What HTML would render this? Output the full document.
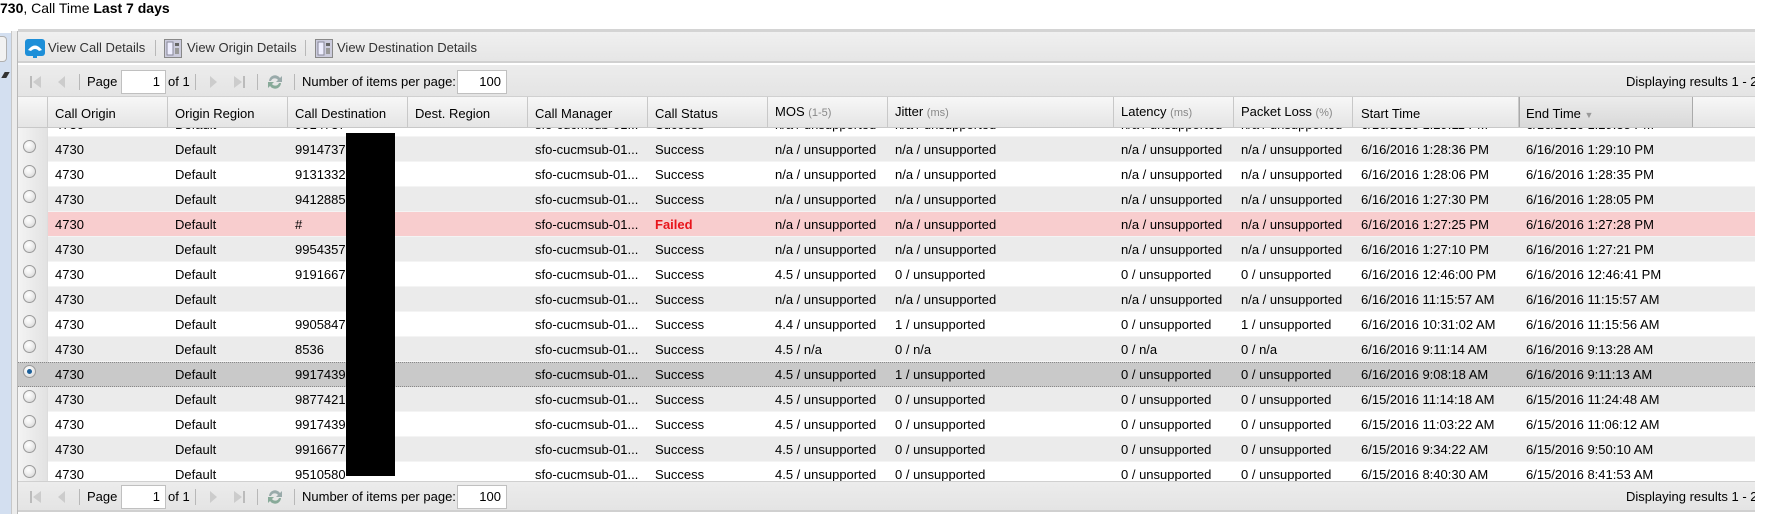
<!DOCTYPE html>
<html><head><meta charset="utf-8"><style>
*{margin:0;padding:0;box-sizing:border-box}
body{width:1774px;height:514px;overflow:hidden;background:#fff;font-family:"Liberation Sans",Arial,sans-serif;font-size:13px;color:#000;position:relative}
.a{position:absolute}
.t{position:absolute;white-space:nowrap}
.row{position:absolute;left:48px;width:1707px;height:25px;border-bottom:1px solid #f4f4f4}
.rad{position:absolute;left:23px;width:13px;height:13px;border-radius:50%;border:1px solid #9a9a9a;background:radial-gradient(circle at 40% 35%,#fff 0,#f0f0f0 40%,#d0d0d0 100%)}
.sep{position:absolute;width:1px;background:#b8b8b8}
.hdr{position:absolute;top:97px;height:31px;border-right:1px solid #c8c8c8;background:linear-gradient(#f7f7f7,#e4e4e4)}
.small{color:#888;font-size:11px}
.inp{position:absolute;background:#fff;border:1px solid #c0c0c0;text-align:right;padding-right:5px;line-height:22px}
</style></head><body>
<div class="t" style="left:0;top:-1px;font-size:14px;line-height:18px"><b>730</b>, Call Time <b>Last 7 days</b></div>
<div class="a" style="left:0;top:33px;width:11px;height:481px;background:#d3dff0"></div>
<div class="a" style="left:0;top:36px;width:7px;height:26px;background:#f2f2f2;border:1px solid #b0b0b0;border-left:none;border-radius:0 4px 4px 0"></div>
<div class="a" style="left:3px;top:72px;width:5px;height:6px;background:#333;transform:skewX(-30deg)"></div>
<div class="a" style="left:11px;top:31px;width:7px;height:483px;background:#ececec;border-left:1px solid #c8c8c8;border-right:1px solid #b8b8b8"></div>
<div class="a" style="left:18px;top:29px;width:1737px;height:3px;background:#d4d4d4"></div>
<div class="a" style="left:18px;top:32px;width:1737px;height:31px;background:linear-gradient(#f0f0f0,#e6e6e6);border-bottom:2px solid #d0d0d0"></div>
<svg class="a" style="left:25px;top:39px" width="20" height="20" viewBox="0 0 20 20"><rect x="0" y="0" width="20" height="17" rx="3" fill="#1e8fd8"/><path d="M3 11 Q10 2 17 11 L14 12 Q10 8 6 12 Z" fill="#fff"/><rect x="8" y="16" width="4" height="3" fill="#1e8fd8"/></svg>
<div class="t" style="left:48px;top:40px;color:#333">View Call Details</div>
<div class="sep" style="left:155px;top:40px;height:16px"></div>
<svg class="a" style="left:164px;top:39px" width="18" height="19" viewBox="0 0 18 19"><rect x="0.5" y="0.5" width="17" height="18" fill="#ccd" stroke="#888"/><rect x="3" y="3" width="6" height="13" fill="#eef" stroke="#889"/><rect x="11" y="4" width="4" height="3" fill="#666"/><rect x="11" y="9" width="4" height="6" fill="#999"/></svg>
<div class="t" style="left:187px;top:40px;color:#333">View Origin Details</div>
<div class="sep" style="left:305px;top:40px;height:16px"></div>
<svg class="a" style="left:315px;top:39px" width="18" height="19" viewBox="0 0 18 19"><rect x="0.5" y="0.5" width="17" height="18" fill="#ccd" stroke="#888"/><rect x="3" y="3" width="6" height="13" fill="#eef" stroke="#889"/><rect x="11" y="4" width="4" height="3" fill="#666"/><rect x="11" y="9" width="4" height="6" fill="#999"/></svg>
<div class="t" style="left:337px;top:40px;color:#333">View Destination Details</div>
<div class="a" style="left:18px;top:65px;width:1737px;height:32px;background:linear-gradient(#ececec,#e4e4e4);border-bottom:1px solid #d0d0d0"></div>
<div id="pg1"></div>
<div class="hdr" style="left:18px;width:30px"></div>
<div class="hdr" style="left:48px;width:120px"></div><div class="t" style="left:55px;top:106px">Call Origin</div>
<div class="hdr" style="left:168px;width:120px"></div><div class="t" style="left:175px;top:106px">Origin Region</div>
<div class="hdr" style="left:288px;width:120px"></div><div class="t" style="left:295px;top:106px">Call Destination</div>
<div class="hdr" style="left:408px;width:120px"></div><div class="t" style="left:415px;top:106px">Dest. Region</div>
<div class="hdr" style="left:528px;width:120px"></div><div class="t" style="left:535px;top:106px">Call Manager</div>
<div class="hdr" style="left:648px;width:120px"></div><div class="t" style="left:655px;top:106px">Call Status</div>
<div class="hdr" style="left:768px;width:120px"></div><div class="t" style="left:775px;top:104px">MOS <span class="small">(1-5)</span></div>
<div class="hdr" style="left:888px;width:226px"></div><div class="t" style="left:895px;top:104px">Jitter <span class="small">(ms)</span></div>
<div class="hdr" style="left:1114px;width:120px"></div><div class="t" style="left:1121px;top:104px">Latency <span class="small">(ms)</span></div>
<div class="hdr" style="left:1234px;width:119px"></div><div class="t" style="left:1241px;top:104px">Packet Loss <span class="small">(%)</span></div>
<div class="hdr" style="left:1353px;width:166px"></div><div class="t" style="left:1361px;top:106px">Start Time</div>
<div class="hdr" style="left:1519px;width:174px;background:linear-gradient(#ececec,#d8d8d8);border-left:1px solid #aaa;border-right:1px solid #aaa"></div><div class="t" style="left:1526px;top:106px">End Time <span style="color:#999;font-size:9px">&#9660;</span></div>
<div class="hdr" style="left:1693px;width:62px;border-right:none"></div>
<div class="a" style="left:18px;top:127px;width:1737px;height:1px;background:#c8c8c8"></div>
<div id="rows"></div>
<div class="a" style="left:18px;top:481px;width:1737px;height:31px;background:linear-gradient(#ececec,#e4e4e4);border-top:1px solid #d0d0d0;border-bottom:2px solid #d0d0d0"></div>
<div id="pg2"></div>
<div class="a" style="left:346px;top:133px;width:49px;height:343px;background:#000"></div>
<script>
(function(){
function pg(c){
 var h='';
 h+='<svg class="a" style="left:30px;top:'+(c-7)+'px" width="12" height="14"><rect x="0" y="1" width="2" height="12" fill="#bbb"/><path d="M11 1 L3 7 L11 13 Z" fill="#ccc"/></svg>';
 h+='<svg class="a" style="left:57px;top:'+(c-7)+'px" width="9" height="14"><path d="M8 1 L1 7 L8 13 Z" fill="#ccc"/></svg>';
 h+='<div class="sep" style="left:79px;top:'+(c-8)+'px;height:16px"></div>';
 h+='<div class="t" style="left:87px;top:'+(c-8)+'px">Page</div>';
 h+='<div class="inp" style="left:121px;top:'+(c-12)+'px;width:45px;height:24px">1</div>';
 h+='<div class="t" style="left:168px;top:'+(c-8)+'px">of 1</div>';
 h+='<div class="sep" style="left:195px;top:'+(c-8)+'px;height:16px"></div>';
 h+='<svg class="a" style="left:209px;top:'+(c-7)+'px" width="9" height="14"><path d="M1 1 L8 7 L1 13 Z" fill="#ccc"/></svg>';
 h+='<svg class="a" style="left:233px;top:'+(c-7)+'px" width="12" height="14"><path d="M1 1 L9 7 L1 13 Z" fill="#ccc"/><rect x="10" y="1" width="2" height="12" fill="#bbb"/></svg>';
 h+='<div class="sep" style="left:257px;top:'+(c-8)+'px;height:16px"></div>';
 h+='<svg class="a" style="left:266px;top:'+(c-9)+'px" width="18" height="18" viewBox="0 0 18 18"><path d="M3 8 A6 6 0 0 1 14 5 L16 3 L16 9 L10 9 L12 7 A4 4 0 0 0 5 8 Z" fill="#9aa"/><path d="M15 10 A6 6 0 0 1 4 13 L2 15 L2 9 L8 9 L6 11 A4 4 0 0 0 13 10 Z" fill="#8a9"/></svg>';
 h+='<div class="sep" style="left:294px;top:'+(c-8)+'px;height:16px"></div>';
 h+='<div class="t" style="left:302px;top:'+(c-8)+'px">Number of items per page:</div>';
 h+='<div class="inp" style="left:457px;top:'+(c-12)+'px;width:50px;height:24px">100</div>';
 h+='<div class="t" style="left:1626px;top:'+(c-8)+'px;width:129px;overflow:hidden">Displaying results 1 - 20</div>';
 return h;
}
document.getElementById('pg1').outerHTML=pg(82);
document.getElementById('pg2').outerHTML=pg(497);
var X=[55,175,295,415,535,655,775,895,1121,1241,1361,1526];
var U='n/a / unsupported';
var D=[
['9914737',U,U,U,U,'6/16/2016 1:29:11 PM','6/16/2016 1:29:35 PM','#fff'],
['9914737',U,U,U,U,'6/16/2016 1:28:36 PM','6/16/2016 1:29:10 PM','#ebebeb'],
['9131332',U,U,U,U,'6/16/2016 1:28:06 PM','6/16/2016 1:28:35 PM','#fff'],
['9412885',U,U,U,U,'6/16/2016 1:27:30 PM','6/16/2016 1:28:05 PM','#ebebeb'],
['#',U,U,U,U,'6/16/2016 1:27:25 PM','6/16/2016 1:27:28 PM','#f8cdce','F'],
['9954357',U,U,U,U,'6/16/2016 1:27:10 PM','6/16/2016 1:27:21 PM','#ebebeb'],
['9191667','4.5 / unsupported','0 / unsupported','0 / unsupported','0 / unsupported','6/16/2016 12:46:00 PM','6/16/2016 12:46:41 PM','#fff'],
['',U,U,U,U,'6/16/2016 11:15:57 AM','6/16/2016 11:15:57 AM','#ebebeb'],
['9905847','4.4 / unsupported','1 / unsupported','0 / unsupported','1 / unsupported','6/16/2016 10:31:02 AM','6/16/2016 11:15:56 AM','#fff'],
['8536','4.5 / n/a','0 / n/a','0 / n/a','0 / n/a','6/16/2016 9:11:14 AM','6/16/2016 9:13:28 AM','#ebebeb'],
['9917439','4.5 / unsupported','1 / unsupported','0 / unsupported','0 / unsupported','6/16/2016 9:08:18 AM','6/16/2016 9:11:13 AM','#c9c9c9','S'],
['9877421','4.5 / unsupported','0 / unsupported','0 / unsupported','0 / unsupported','6/15/2016 11:14:18 AM','6/15/2016 11:24:48 AM','#ebebeb'],
['9917439','4.5 / unsupported','0 / unsupported','0 / unsupported','0 / unsupported','6/15/2016 11:03:22 AM','6/15/2016 11:06:12 AM','#fff'],
['9916677','4.5 / unsupported','0 / unsupported','0 / unsupported','0 / unsupported','6/15/2016 9:34:22 AM','6/15/2016 9:50:10 AM','#ebebeb'],
['9510580','4.5 / unsupported','0 / unsupported','0 / unsupported','0 / unsupported','6/15/2016 8:40:30 AM','6/15/2016 8:41:53 AM','#fff']];
var h='<div class="a" style="left:18px;top:128px;width:1737px;height:353px;overflow:hidden">';
h+='<div class="a" style="left:0;top:0;width:30px;height:353px;background:linear-gradient(90deg,#f4f4f4,#e2e2e2);border-right:1px solid #ddd"></div>';
for(var i=0;i<D.length;i++){
 var r=D[i],ry=-16+25*i,tt=ry+5;
 var st='background:'+r[7]+';top:'+ry+'px;left:30px;';
 if(r[8]=='S')st+='border-top:1px dotted #888;border-bottom:1px dotted #888;left:0;width:1737px;';
 h+='<div class="row" style="'+st+'"></div>';
 h+='<div class="rad" style="left:5px;top:'+(ry+3)+'px">'+(r[8]=='S'?'<div style="position:absolute;left:3px;top:3px;width:5px;height:5px;border-radius:50%;background:#1a5f9a"></div>':'')+'</div>';
 var v=['4730','Default',r[0],'','sfo-cucmsub-01...',r[8]=='F'?'Failed':'Success',r[1],r[2],r[3],r[4],r[5],r[6]];
 for(var j=0;j<12;j++){if(!v[j])continue;
  var s='left:'+(X[j]-18)+'px;top:'+tt+'px;';
  if(j==5&&r[8]=='F')s+='color:#e8141b;font-weight:bold;';
  h+='<div class="t" style="'+s+'">'+v[j]+'</div>';}
}
h+='</div>';
document.getElementById('rows').outerHTML=h;
})();
</script>
</body></html>
